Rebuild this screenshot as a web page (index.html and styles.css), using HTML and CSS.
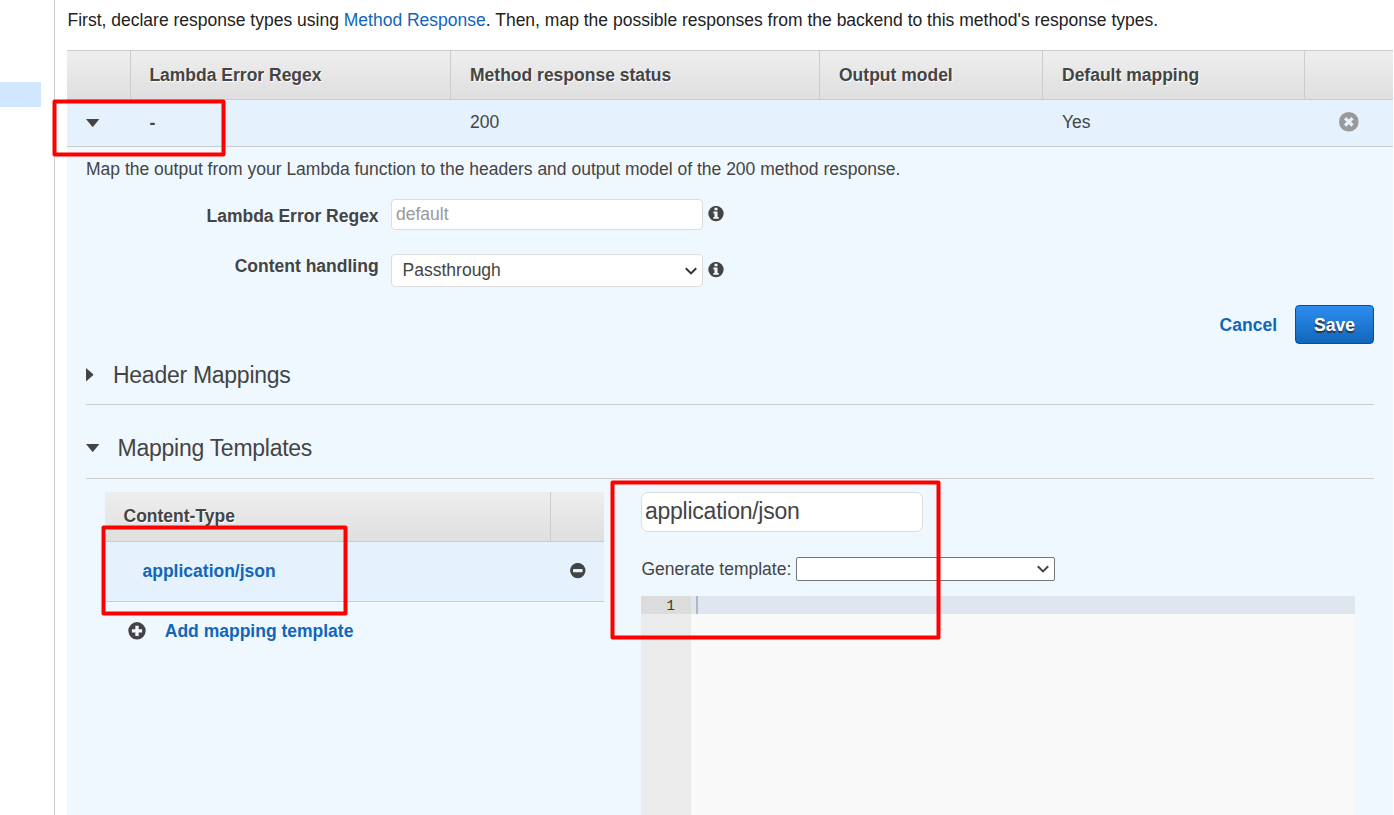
FILE: index.html
```
<!DOCTYPE html>
<html lang="en">
<head>
<meta charset="utf-8">
<title>Integration Response</title>
<link rel="stylesheet" href="styles.css">
</head>
<body>
<div class="page">
  <aside class="sidebar"><div class="selected"></div></aside>
  <main class="main">
    <p class="intro"><span>First, declare response types using <a>Method Response</a>. Then, map the possible responses from the backend to this method's response types.</span></p>
    <div class="grid head">
      <div></div><div>Lambda Error Regex</div><div>Method response status</div><div>Output model</div><div>Default mapping</div><div></div>
    </div>
    <div class="grid row">
      <div class="toggle"><svg width="14" height="8" viewBox="0 0 14 8"><path d="M0 0h13.400L7.300 7.400q-.6.600-1.200 0z" fill="#444"/></svg></div>
      <div class="dash">-</div><div>200</div><div></div><div>Yes</div>
      <div class="remove"><svg width="20" height="20" viewBox="0 0 20 20"><circle cx="9.800" cy="9.800" r="9.800" fill="#999"/><path d="M6.100 6.100l7.400 7.400M13.500 6.100l-7.400 7.400" stroke="#e5f1fd" stroke-width="3.200"/></svg></div>
    </div>
    <section class="panel">
      <p class="note">Map the output from your Lambda function to the headers and output model of the 200 method response.</p>
      <div class="field first">
        <label>Lambda Error Regex</label>
        <div class="input default">default</div>
        <svg class="info" width="16" height="16" viewBox="0 0 16 16"><circle cx="8" cy="7.600" r="7.700" fill="#444"/><path d="M6.500 1.700h3v2.500h-3zM5.400 5.600h4.100v5.300h1.300v1.900H5.300v-1.900h1.200V7.500H5.400z" fill="#f0f8ff"/></svg>
      </div>
      <div class="field second">
        <label>Content handling</label>
        <div class="input choice"><span>Passthrough</span><svg width="12" height="8" viewBox="0 0 12 8"><path d="M.8 1.200L6 6.400l5.200-5.200" fill="none" stroke="#333" stroke-width="2"/></svg></div>
        <svg class="info" width="16" height="16" viewBox="0 0 16 16"><circle cx="8" cy="7.600" r="7.700" fill="#444"/><path d="M6.500 1.700h3v2.500h-3zM5.400 5.600h4.100v5.300h1.300v1.900H5.300v-1.900h1.200V7.500H5.400z" fill="#f0f8ff"/></svg>
      </div>
      <div class="actions"><a>Cancel</a><button class="save">Save</button></div>
      <h2 class="section closed"><svg width="8" height="14" viewBox="0 0 8 14"><path d="M0 0l7 6.100q.6.600 0 1.200L0 13.400z" fill="#444"/></svg><span>Header Mappings</span></h2>
      <h2 class="section open"><svg width="14" height="8" viewBox="0 0 14 8"><path d="M0 0h13.400L7.300 7.400q-.6.600-1.200 0z" fill="#444"/></svg><span>Mapping Templates</span></h2>
      <div class="templates">
        <div class="types">
          <div class="types-head"><div>Content-Type</div><div></div></div>
          <div class="types-row"><a>application/json</a><svg width="16" height="16" viewBox="0 0 16 16"><circle cx="7.800" cy="7.600" r="7.700" fill="#444"/><rect x="3" y="6" width="9.600" height="3.200" rx=".8" fill="#e5f1fd"/></svg></div>
          <div class="add"><svg width="18" height="18" viewBox="0 0 18 18"><circle cx="9" cy="8.800" r="8.700" fill="#444"/><path d="M9 3.700v10.200M3.900 8.800h10.200" stroke="#f0f8ff" stroke-width="3.300"/></svg><a>Add mapping template</a></div>
        </div>
        <div class="template">
          <div class="name"><span>application/json</span></div>
          <div class="generate"><span>Generate template:</span><div class="models"><svg width="12" height="8" viewBox="0 0 12 8"><path d="M.8 1.200L6 6.400l5.200-5.200" fill="none" stroke="#444" stroke-width="2"/></svg></div></div>
          <div class="editor"><div class="gutter"><div class="line-no">1</div></div><div class="code"><div class="active-line"><i></i></div></div></div>
        </div>
      </div>
    </section>
  </main>
  <svg class="marks" width="1394" height="815" viewBox="0 0 1394 815">
    <g fill="none" stroke="#f00" stroke-width="4" stroke-linejoin="round">
      <rect x="54.500" y="101.500" width="169" height="53"/>
      <rect x="103.500" y="527.500" width="242" height="86"/>
      <rect x="612.500" y="482.500" width="326" height="155"/>
    </g>
  </svg>
</div>
</body>
</html>
```
FILE: styles.css
```
* { box-sizing: border-box; }
body { margin: 0; background: #fff; color: #444; font: 17.5px/20px "Liberation Sans", Arial, sans-serif; }
p, h2 { margin: 0; }
a { color: #1166bb; }
svg { display: block; flex: none; }
.page { position: relative; width: 1394px; height: 815px; overflow: hidden; display: flex; white-space: nowrap; }
.sidebar { width: 55px; padding-top: 82px; border-right: 1px solid #ccc; flex: none; }
.selected { width: 41px; height: 25px; background: #d1e7ff; }
.main { width: 1338px; padding-left: 12px; flex: none; display: flex; flex-direction: column; }
.intro { height: 50px; padding: 10px 0 0 .5px; color: #222; flex: none; }
.grid { display: grid; grid-template-columns: 64px 320px 369px 223px 262px 88px; flex: none; }
.grid > div { padding-left: 19px; }
.head { height: 50px; border-top: 1px solid #ccc; border-bottom: 1px solid #ccc; background: linear-gradient(#eee, #dfdfdf); font-weight: bold; line-height: 48px; text-shadow: 1px 1px 0 #fff; }
.head > div + div { border-left: 1px solid #ccc; margin-left: -1px; }
.head > div:nth-child(2), .row > .dash { padding-left: 18.4px; }
.row { height: 47px; background: #e5f1fd; border-bottom: 1px solid #ccc; line-height: 44px; }
.row .toggle { padding-top: 19px; }
.row .dash { font-weight: bold; line-height: 46px; }
.row .remove { padding: 12px 0 0 34px; }
.panel { flex: 1; background: #f0f8ff; padding: 12px 19px 0; }
.note { height: 40px; }
.field { display: flex; align-items: flex-start; }
.field label { width: 292.6px; text-align: right; font-weight: bold; margin-right: 12.4px; }
.field .input { width: 312px; background: #fff; border: 1px solid #ddd; border-radius: 4px; margin-right: 5px; }
.first { height: 55px; }
.first label { padding-top: 7px; }
.default { height: 31px; padding: 4px; color: #999; }
.first .info { margin-top: 7px; }
.second { height: 51px; }
.second label { padding-top: 2px; }
.choice { height: 33px; display: flex; align-items: center; justify-content: space-between; padding: 0 5px 0 10.6px; }
.choice span { padding-bottom: 2px; }
.second .info { margin-top: 8px; }
.actions { height: 39px; display: flex; justify-content: flex-end; align-items: center; gap: 18px; font-weight: bold; }
.save { width: 79px; height: 39px; padding: 0; color: #fff; font: inherit; background: linear-gradient(#2e8df0, #1166bb); border: 1px solid #0d4d8c; border-radius: 4px; text-shadow: 0 2px 1px #333; }
.section { display: flex; align-items: center; font-size: 23px; letter-spacing: -.27px; line-height: 26px; font-weight: normal; border-bottom: 1px solid #ccc; }
.closed { height: 61px; padding-top: 2px; gap: 19px; }
.open { height: 74px; padding-top: 13px; gap: 17.6px; }
.templates { display: flex; padding: 13px 19px 0; gap: 37px; }
.types { width: 499px; flex: none; }
.types-head { height: 50px; display: grid; grid-template-columns: 445px 54px; border-bottom: 1px solid #ccc; background: linear-gradient(#eee, #dfdfdf); font-weight: bold; line-height: 48px; text-shadow: 1px 1px 0 #fff; }
.types-head > div { padding-left: 18.5px; }
.types-head > div + div { border-left: 1px solid #ccc; }
.types-row { height: 60px; display: flex; align-items: center; justify-content: space-between; padding: 0 18px 1px 37.5px; background: #e5f1fd; border-bottom: 1px solid #ccc; font-weight: bold; }
.add { display: flex; align-items: center; height: 58px; padding-left: 23px; gap: 18.8px; font-weight: bold; }
.template { width: 714px; }
.name { width: 282px; height: 40px; padding: 5px 3px; background: #fff; border: 1px solid #ddd; border-radius: 7px; font-size: 23px; letter-spacing: -.25px; line-height: 27px; }
.generate { display: flex; align-items: center; height: 24px; margin: 25px 0 15px; }
.generate span { width: 155px; padding-left: .5px; }
.models { width: 259px; height: 24px; background: #fff; border: 1px solid #767676; border-radius: 2px; display: flex; justify-content: flex-end; align-items: center; padding-right: 5px; }
.editor { display: flex; height: 219px; background: #f9f9f9; }
.gutter { width: 50px; background: #ebebeb; }
.line-no { height: 18px; background: #dcdcdc; padding-right: 16px; text-align: right; color: #333; font: 14px/20px "Liberation Mono", monospace; }
.code { flex: 1; }
.active-line { height: 18px; padding-left: 5px; background: #dfe6f0; }
.active-line i { display: block; width: 2px; height: 18px; background: #b0b8c5; }
.marks { position: absolute; left: 0; top: 0; }
```
